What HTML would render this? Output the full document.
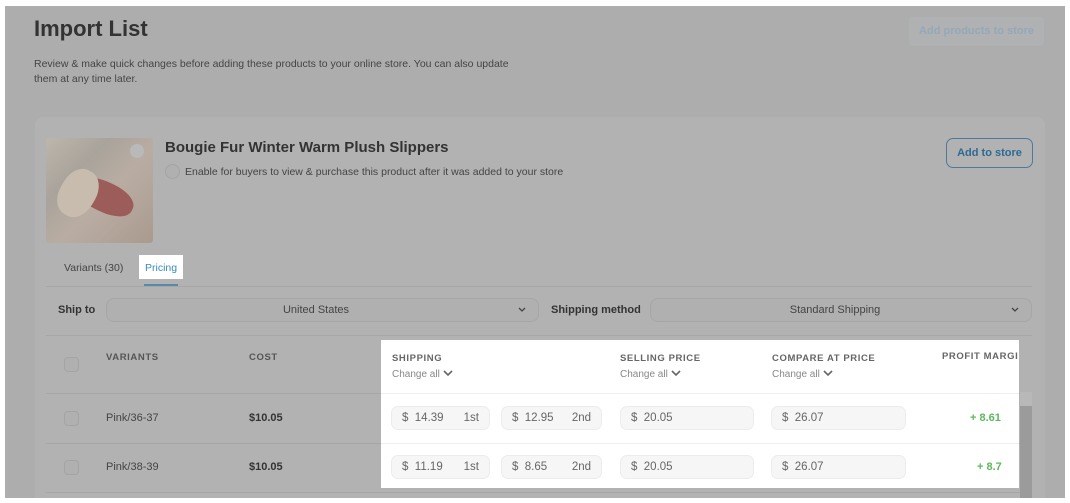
<!DOCTYPE html>
<html><head><meta charset="utf-8"><style>
*{margin:0;padding:0;box-sizing:border-box}
body{width:1070px;height:503px;background:#fff;font-family:"Liberation Sans",sans-serif;position:relative;overflow:hidden}
.a{position:absolute}
.ov{left:5px;top:6px;width:1060px;height:492px;background:#adadad;overflow:hidden}
.card{left:30px;top:111px;width:1010px;height:400px;background:#b2b2b2;border-radius:8px}
.inp{position:absolute;border:1px solid #a6a6a6;background:#b0b0b0;border-radius:8px;height:24px}
.hl{left:381px;top:340px;width:638px;height:148px;background:#fff;overflow:hidden}
.wi{position:absolute;background:#f6f6f6;border:1px solid #ececec;border-radius:7px;height:24px;font-size:11.5px;color:#666;line-height:22px}
.hd{font-size:9.5px;font-weight:bold;letter-spacing:.6px;color:#666;white-space:nowrap}
.ch{font-size:10px;color:#888}
.cb{position:absolute;width:15px;height:15px;border:1px solid #a4a4a4;border-radius:4px;background:#b0b0b0}
</style></head><body>
<div class="a ov">
<div class="a card"></div>
</div>
<div class="a" style="left:34px;top:16px;font-size:22px;font-weight:bold;color:#333">Import List</div>
<div class="a" style="left:34px;top:57px;font-size:10.5px;line-height:15px;width:500px;color:#444">Review &amp; make quick changes before adding these products to your online store. You can also update them at any time later.</div>
<div class="a" style="left:909px;top:17px;width:135px;height:29px;background:#afb1b3;border-radius:4px;color:#94a8b8;font-size:11px;font-weight:bold;text-align:center;line-height:29px">Add products to store</div>
<div class="a" style="left:46px;top:138px;width:107px;height:105px;border-radius:3px;background:linear-gradient(135deg,#bdb6ac 0%,#a9a39b 30%,#b9ada3 55%,#aa9a8e 100%)"></div>
<div class="a" style="left:75px;top:182px;width:60px;height:30px;border-radius:45%;background:#9c5c5a;transform:rotate(25deg)"></div>
<div class="a" style="left:60px;top:168px;width:36px;height:50px;border-radius:45%;background:#c8bcae;transform:rotate(30deg)"></div>
<div class="a" style="left:130px;top:144px;width:14px;height:14px;border-radius:50%;background:#b9b9b9"></div>
<div class="a" style="left:165px;top:139px;font-size:15px;font-weight:bold;color:#333">Bougie Fur Winter Warm Plush Slippers</div>
<div class="cb" style="left:165px;top:164px;border-radius:50%"></div>
<div class="a" style="left:185px;top:166px;font-size:10.5px;color:#444">Enable for buyers to view &amp; purchase this product after it was added to your store</div>
<div class="a" style="left:946px;top:138px;width:87px;height:30px;border:1px solid #4b7a9b;border-radius:7px;color:#2b6a95;font-size:11px;font-weight:bold;text-align:center;line-height:28px">Add to store</div>
<div class="a" style="left:64px;top:262px;font-size:10.5px;color:#444">Variants (30)</div>
<div class="a" style="left:139px;top:255px;width:44px;height:24px;background:#fff"></div>
<div class="a" style="left:145px;top:262px;font-size:10.5px;color:#3a8ac0">Pricing</div>
<div class="a" style="left:144px;top:284px;width:34px;height:2px;background:#5889ab"></div>
<div class="a" style="left:46px;top:286px;width:986px;height:1px;background:#a6a6a6"></div>
<div class="a" style="left:58px;top:304px;font-size:11px;font-weight:bold;color:#333">Ship to</div>
<div class="inp" style="left:106px;top:298px;width:433px"></div>
<div class="a" style="left:106px;top:304px;width:420px;text-align:center;font-size:11px;color:#444">United States</div>
<svg class="a" style="left:518px;top:307px" width="8" height="6"><path d="M1 1l3 3 3-3" stroke="#444" stroke-width="1.3" fill="none"/></svg>
<div class="a" style="left:551px;top:304px;font-size:11px;font-weight:bold;color:#333">Shipping method</div>
<div class="inp" style="left:650px;top:298px;width:382px"></div>
<div class="a" style="left:650px;top:304px;width:370px;text-align:center;font-size:11px;color:#444">Standard Shipping</div>
<svg class="a" style="left:1011px;top:307px" width="8" height="6"><path d="M1 1l3 3 3-3" stroke="#444" stroke-width="1.3" fill="none"/></svg>
<div class="a" style="left:46px;top:335px;width:986px;height:1px;background:#a6a6a6"></div>
<div class="cb" style="left:64px;top:357px"></div>
<div class="a hd" style="left:106px;top:352px;color:#555">VARIANTS</div>
<div class="a hd" style="left:249px;top:352px;color:#555">COST</div>
<div class="a" style="left:46px;top:393px;width:986px;height:1px;background:#a6a6a6"></div>
<div class="cb" style="left:64px;top:411px"></div>
<div class="a" style="left:106px;top:412px;font-size:11px;color:#444">Pink/36-37</div>
<div class="a" style="left:249px;top:412px;font-size:11px;font-weight:bold;color:#333">$10.05</div>
<div class="a" style="left:46px;top:443px;width:986px;height:1px;background:#a6a6a6"></div>
<div class="cb" style="left:64px;top:460px"></div>
<div class="a" style="left:106px;top:461px;font-size:11px;color:#444">Pink/38-39</div>
<div class="a" style="left:249px;top:461px;font-size:11px;font-weight:bold;color:#333">$10.05</div>
<div class="a" style="left:46px;top:492px;width:986px;height:1px;background:#a6a6a6"></div>
<div class="a" style="left:1020px;top:396px;width:12px;height:102px;background:#9b9b9b"></div>
<div class="a" style="left:1020px;top:392px;width:12px;height:14px;background:#b8b8b8"></div>
<div class="a hl">
<div class="a hd" style="left:11px;top:13px">SHIPPING</div>
<div class="a ch" style="left:11px;top:29px">Change all <svg width="10" height="7"><path d="M1 1l4 4 4-4" stroke="#666" stroke-width="1.6" fill="none"/></svg></div>
<div class="a hd" style="left:239px;top:13px">SELLING PRICE</div>
<div class="a ch" style="left:239px;top:29px">Change all <svg width="10" height="7"><path d="M1 1l4 4 4-4" stroke="#666" stroke-width="1.6" fill="none"/></svg></div>
<div class="a hd" style="left:391px;top:13px">COMPARE AT PRICE</div>
<div class="a ch" style="left:391px;top:29px">Change all <svg width="10" height="7"><path d="M1 1l4 4 4-4" stroke="#666" stroke-width="1.6" fill="none"/></svg></div>
<div class="a hd" style="left:561px;top:11px">PROFIT MARGIN</div>
<div class="a" style="left:0;top:53px;width:638px;height:1px;background:#eee"></div>
<div class="a" style="left:0;top:103px;width:638px;height:1px;background:#eee"></div>
</div>
<div class="wi" style="left:391px;top:406px;width:99px;padding-left:10px">$&nbsp; 14.39<span style="position:absolute;right:10px">1st</span></div>
<div class="wi" style="left:501px;top:406px;width:101px;padding-left:10px">$&nbsp; 12.95<span style="position:absolute;right:10px">2nd</span></div>
<div class="wi" style="left:620px;top:406px;width:134px;padding-left:10px">$&nbsp; 20.05</div>
<div class="wi" style="left:771px;top:406px;width:135px;padding-left:10px">$&nbsp; 26.07</div>
<div class="a" style="left:970px;top:412px;font-size:11px;font-weight:bold;color:#5cb85c">+ 8.61</div>
<div class="wi" style="left:391px;top:455px;width:99px;padding-left:10px">$&nbsp; 11.19<span style="position:absolute;right:10px">1st</span></div>
<div class="wi" style="left:501px;top:455px;width:101px;padding-left:10px">$&nbsp; 8.65<span style="position:absolute;right:10px">2nd</span></div>
<div class="wi" style="left:620px;top:455px;width:134px;padding-left:10px">$&nbsp; 20.05</div>
<div class="wi" style="left:771px;top:455px;width:135px;padding-left:10px">$&nbsp; 26.07</div>
<div class="a" style="left:977px;top:461px;font-size:11px;font-weight:bold;color:#5cb85c">+ 8.7</div>
</body></html>
